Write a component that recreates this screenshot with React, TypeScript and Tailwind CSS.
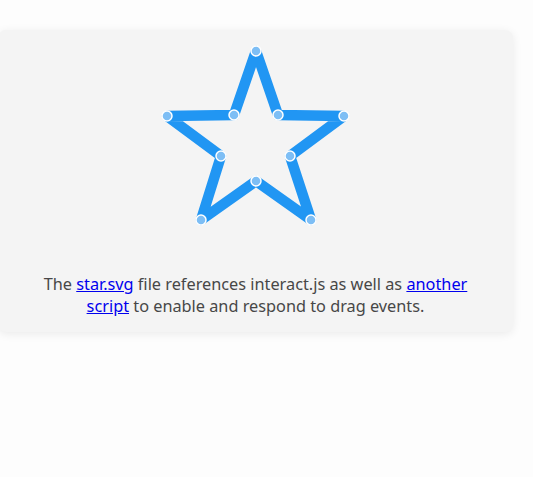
const outer: [number, number][] = [
  [258, 21],
  [346, 86],
  [313, 190],
  [203, 190],
  [169, 86],
];

const inner: [number, number][] = [
  [280, 85],
  [292, 126],
  [258, 151],
  [223, 126],
  [236, 85],
];

// alternate outer / inner points around the star
const points: [number, number][] = outer.flatMap((p, i) => [p, inner[i]]);

function Star() {
  return (
    <svg width="515" height="243" viewBox="0 0 515 243" className="block">
      <polygon
        points={points.map((p) => p.join(",")).join(" ")}
        fill="none"
        stroke="#2196f3"
        strokeWidth="10.5"
        strokeLinejoin="round"
      />
      {points.map(([x, y], i) => (
        <circle
          key={i}
          cx={x}
          cy={y}
          r="5"
          fill="#7dbef5"
          stroke="#ffffff"
          strokeWidth="1.5"
        />
      ))}
    </svg>
  );
}

export default function App() {
  return (
    <div className="min-h-screen bg-[#fdfdfd] pt-[30px] font-['Noto_Sans',sans-serif]">
      <div className="-ml-[2px] w-[515px] rounded-lg bg-[#f4f4f4] pb-[15px] shadow-[0_2px_10px_rgba(0,0,0,0.08)]">
        <Star />
        <p className="px-9 text-center text-[16.3px] leading-[22px] text-[#474747]">
          The{" "}
          <a href="#" className="text-[#0000ee] underline">
            star.svg
          </a>{" "}
          file references interact.js as well as{" "}
          <a href="#" className="text-[#0000ee] underline">
            another script
          </a>{" "}
          to enable and respond to drag events.
        </p>
      </div>
    </div>
  );
}
